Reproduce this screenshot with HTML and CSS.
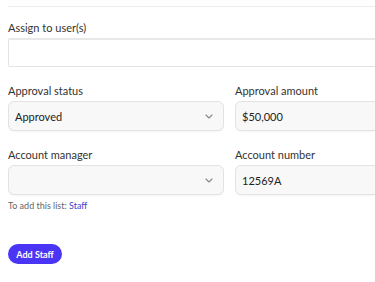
FILE: index.html
```html
<!DOCTYPE html>
<html lang="en">
<head>
    <meta charset="UTF-8">
    <meta name="viewport" content="width=device-width, initial-scale=1.0">
    <title>Add Staff</title>
    <link rel="stylesheet" href="styles.css">
</head>
<body>
    <div class="form">
        <div class="divider"></div>

        <div class="field">
            <label class="label">Assign to user(s)</label>
            <div class="input input-plain"></div>
        </div>

        <div class="row">
            <div class="field">
                <label class="label">Approval status</label>
                <div class="input select">
                    <span>Approved</span>
                    <svg class="chevron" width="8" height="5" viewBox="0 0 8 5"><path d="M1 1l3 3 3-3" fill="none" stroke="#888" stroke-width="1.1" stroke-linecap="round" stroke-linejoin="round"/></svg>
                </div>
            </div>
            <div class="field">
                <label class="label">Approval amount</label>
                <div class="input">$50,000</div>
            </div>
        </div>

        <div class="row">
            <div class="field">
                <label class="label">Account manager</label>
                <div class="input select">
                    <span></span>
                    <svg class="chevron" width="8" height="5" viewBox="0 0 8 5"><path d="M1 1l3 3 3-3" fill="none" stroke="#888" stroke-width="1.1" stroke-linecap="round" stroke-linejoin="round"/></svg>
                </div>
                <p class="hint">To add this list: <a href="#">Staff</a></p>
            </div>
            <div class="field">
                <label class="label">Account number</label>
                <div class="input">12569A</div>
            </div>
        </div>

        <button class="btn">Add Staff</button>
    </div>
</body>
</html>
```

FILE: styles.css
```css
* {
    margin: 0;
    padding: 0;
    box-sizing: border-box;
}

html, body {
    overflow: hidden;
}

body {
    background: #fff;
    font-family: Lato, "Noto Sans", sans-serif;
    color: #2b2b2b;
    padding: 0 0 0 8px;
}

.form {
    width: 443px;
    display: flex;
    flex-direction: column;
}

.divider {
    height: 1px;
    background: #ececec;
    margin-top: 6px;
    margin-bottom: 14px;
}

.field {
    display: flex;
    flex-direction: column;
    flex: 1;
}

.label {
    font-size: 11px;
    line-height: 14px;
    margin-bottom: 3px;
    color: #333;
}

.row {
    display: flex;
    gap: 11px;
    margin-top: 17px;
}

.input {
    height: 30px;
    border: 1px solid #e3e3e3;
    border-radius: 6px;
    background: #f8f8f8;
    font-size: 11px;
    color: #222;
    padding: 0 6px;
    display: flex;
    align-items: center;
    box-shadow: 0 1px 1px rgba(0, 0, 0, 0.04);
}

.input-plain {
    background: #fff;
    border-radius: 2px;
    border-top: 2px solid #e8e8e8;
    height: 29px;
    box-shadow: none;
}

.select {
    justify-content: space-between;
    padding-right: 10px;
}

.hint {
    font-size: 9px;
    line-height: 10px;
    color: #666;
    margin-top: 6px;
}

.hint a {
    color: #3f3fd1;
    text-decoration: none;
}

.btn {
    align-self: flex-start;
    margin-top: 33px;
    background: #4b35f5;
    color: #fff;
    border: none;
    border-radius: 10px;
    height: 20px;
    width: 54px;
    font-family: Lato, "Noto Sans", sans-serif;
    font-size: 9px;
    font-weight: 700;
}
```
